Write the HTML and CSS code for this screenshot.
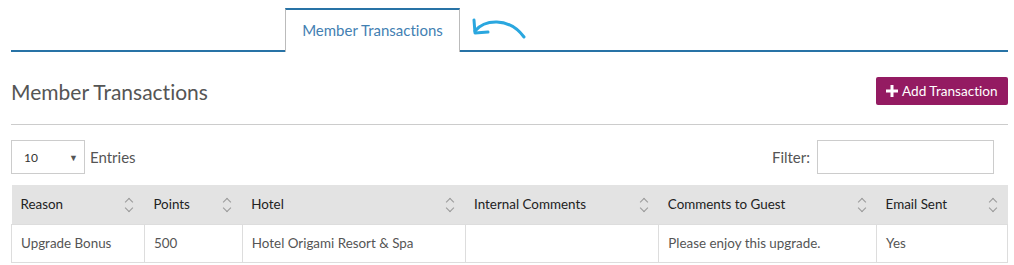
FILE: index.html
```html
<!DOCTYPE html>
<html>
<head>
<meta charset="utf-8">
<link rel="stylesheet" href="styles.css">
</head>
<body>
<div class="page">
  <div class="tabs">
    <div class="tab">Member Transactions</div>
    <svg class="hint-arrow" width="60" height="26" viewBox="0 0 60 26">
      <path d="M5 17 C 14 6, 38 2, 54 23" fill="none" stroke="#2aa7df" stroke-width="3" stroke-linecap="round"/>
      <path d="M4 6 L5 19 L18 18" fill="none" stroke="#2aa7df" stroke-width="3" stroke-linecap="round" stroke-linejoin="round"/>
    </svg>
  </div>

  <div class="header">
    <h2 class="title">Member Transactions</h2>
    <button class="btn-add">
      <svg class="plus" width="12" height="12" viewBox="0 0 12 12"><path d="M4.5 0h3v4.5H12v3H7.5V12h-3V7.5H0v-3h4.5z" fill="#fff"/></svg>
      Add Transaction
    </button>
  </div>
  <hr class="rule">

  <div class="controls">
    <div class="length">
      <div class="select"><span>10</span><span class="caret">▼</span></div>
      <span class="label">Entries</span>
    </div>
    <div class="filter">
      <span class="label">Filter:</span>
      <div class="input"></div>
    </div>
  </div>

  <table class="grid">
    <thead>
      <tr>
        <th class="c1">Reason<i class="sort"></i></th>
        <th class="c2">Points<i class="sort"></i></th>
        <th class="c3">Hotel<i class="sort"></i></th>
        <th class="c4">Internal Comments<i class="sort"></i></th>
        <th class="c5">Comments to Guest<i class="sort"></i></th>
        <th class="c6">Email Sent<i class="sort"></i></th>
      </tr>
    </thead>
    <tbody>
      <tr>
        <td>Upgrade Bonus</td>
        <td>500</td>
        <td>Hotel Origami Resort &amp; Spa</td>
        <td></td>
        <td>Please enjoy this upgrade.</td>
        <td>Yes</td>
      </tr>
    </tbody>
  </table>
</div>
</body>
</html>
```

FILE: styles.css
```css
* { box-sizing: border-box; }
body {
  margin: 0;
  font-family: "Lato", "Noto Sans", sans-serif;
  font-variant-ligatures: none;
  color: #555;
  background: #fff;
}
.page {
  padding: 8px 6px 0 11px;
}
.tabs {
  display: flex;
  align-items: flex-start;
  border-bottom: 2px solid #2873a6;
  height: 44px;
}
.tab {
  margin-left: 274px;
  width: 175px;
  height: 44px;
  margin-bottom: -2px;
  background: #fff;
  border-top: 2px solid #2873a6;
  border-left: 1px solid #bbb;
  border-right: 1px solid #bbb;
  color: #4380b2;
  font-size: 15px;
  display: flex;
  align-items: center;
  justify-content: center;
  padding-bottom: 2px;
}
.hint-arrow {
  margin-left: 10px;
  margin-top: 6px;
}
.header {
  display: flex;
  justify-content: space-between;
  align-items: center;
  margin-top: 25px;
  height: 28px;
}
.title {
  margin: 0;
  font-size: 21px;
  font-weight: 400;
  color: #555;
}
.btn-add {
  font-family: inherit;
  font-variant-ligatures: none;
  background: #941b62;
  color: #fff;
  border: none;
  border-radius: 2px;
  height: 28px;
  width: 132px;
  font-size: 13.6px;
  padding: 0 0 0 10px;
  display: flex;
  align-items: center;
  gap: 4px;
  cursor: pointer;
}
.plus {
  flex: none;
}
.rule {
  border: none;
  border-top: 1px solid #ccc;
  margin: 19px 0 15px;
}
.controls {
  display: flex;
  justify-content: space-between;
  align-items: center;
  height: 34px;
}
.length, .filter {
  display: flex;
  align-items: center;
  gap: 5px;
}
.select {
  width: 74px;
  height: 34px;
  border: 1px solid #ccc;
  display: flex;
  align-items: center;
  justify-content: space-between;
  padding: 0 6px 0 12px;
  font-size: 12px;
  color: #333;
}
.caret {
  font-size: 9px;
  color: #555;
}
.label {
  font-size: 15px;
  color: #555;
}
.filter {
  gap: 7px;
  margin-right: 14px;
}
.input {
  width: 177px;
  height: 34px;
  border: 1px solid #ccc;
}
.grid {
  width: 997px;
  margin-top: 11px;
  border-collapse: collapse;
  font-size: 13.4px;
}
.grid th {
  background: #e3e3e3;
  color: #222;
  font-weight: 400;
  text-align: left;
  height: 39px;
  padding: 0 9px;
  position: relative;
}
.grid td {
  height: 38px;
  padding: 0 9px;
  border: 1px solid #ddd;
  color: #555;
}
.c1 { width: 133px; }
.c2 { width: 98px; }
.c3 { width: 223px; }
.c4 { width: 194px; }
.c5 { width: 218px; }
.c6 { width: 131px; }
.sort {
  position: absolute;
  right: 10px;
  top: 12px;
  width: 10px;
  height: 16px;
}
.sort::before, .sort::after {
  content: "";
  position: absolute;
  left: 2px;
  width: 5px;
  height: 5px;
  border-left: 1px solid #999;
  border-top: 1px solid #999;
}
.sort::before { top: 2px; transform: rotate(45deg); }
.sort::after { top: 8px; transform: rotate(225deg); }
```
